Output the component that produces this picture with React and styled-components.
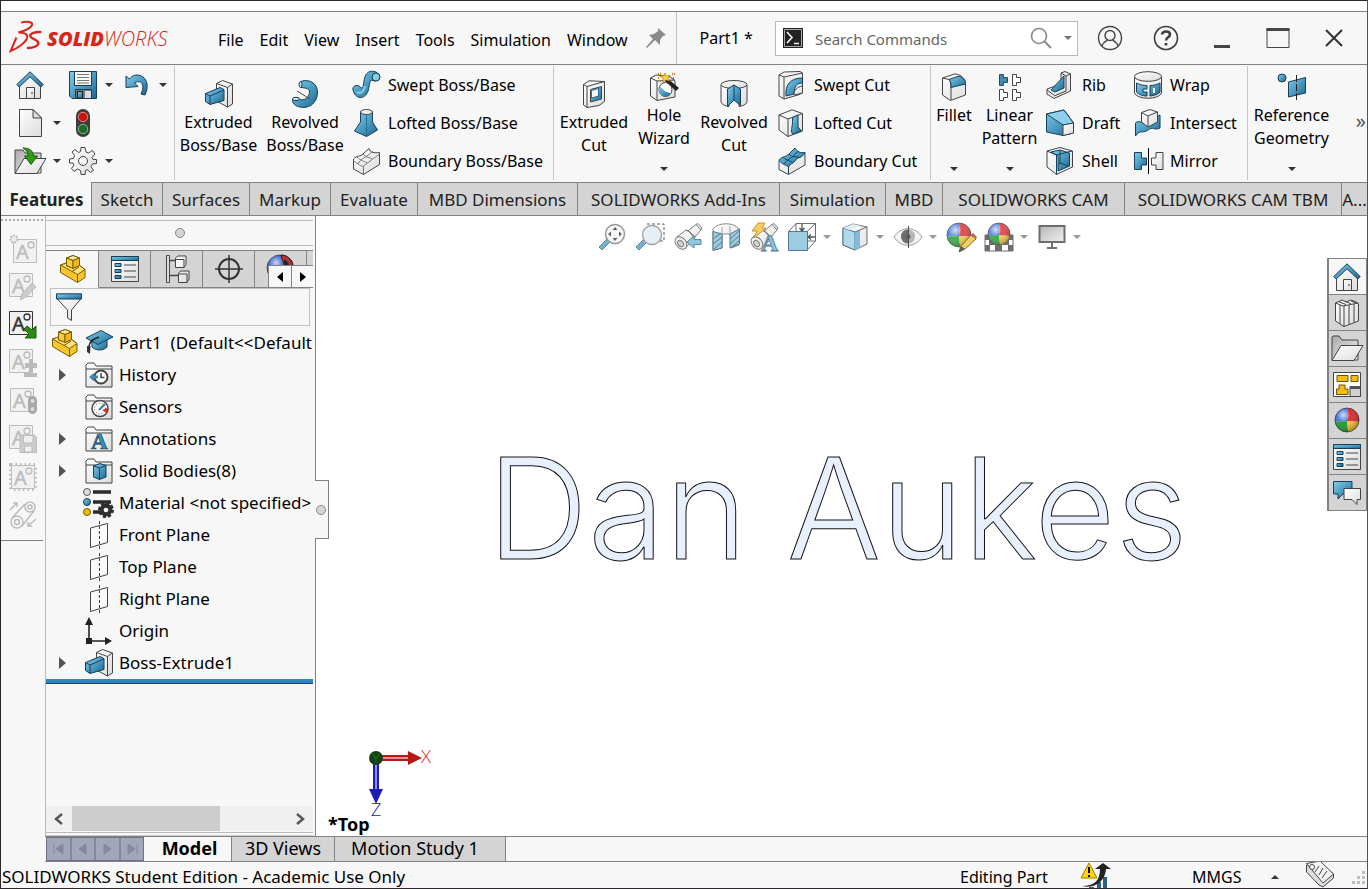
import React from "react";
import styled, { createGlobalStyle, css } from "styled-components";

const GlobalStyle = createGlobalStyle`
  *, *::before, *::after { box-sizing: border-box; }
  body {
    margin: 0;
    background: #fff;
    color: #000;
    font: 16px/24px "Noto Sans", "Open Sans", sans-serif;
  }
  button, input {
    font: inherit;
    color: inherit;
    margin: 0;
    padding: 0;
    border: 0;
    border-radius: 0;
    background: none;
    outline: none;
  }
  ul { list-style: none; margin: 0; padding: 0; }
  svg { display: block; flex: none; }
`;

/* ---------- icon artwork, 28 x 28 grid ---------- */

const B = "url(#blueFill)";
const W = "url(#whiteFill)";
const K = "#444";
const N = "#173f57";

const LINE = { fill: "none", stroke: K };
const SLAB = { fill: W, stroke: K, strokeLinejoin: "round" };
const BLUE = { fill: B, stroke: N, strokeLinejoin: "round" };

const Ball = ({ x = 14, y = 13, r = 12 }) => (
  <g transform={`translate(${x} ${y})`}>
    <path d={`M0 1L${-r} ${r * 0.15}A${r} ${r} 0 0 1 ${r * 0.1} ${-r}Z`} fill="#3b6fd6" />
    <path d={`M0 1L${r * 0.1} ${-r}A${r} ${r} 0 0 1 ${r} ${r * 0.15}Z`} fill="#d9252a" />
    <path d={`M0 1L${-r} ${r * 0.15}A${r} ${r} 0 0 0 ${r * 0.1} ${r}Z`} fill="#149a2c" />
    <path d={`M0 1L${r * 0.1} ${r}A${r} ${r} 0 0 0 ${r} ${r * 0.15}Z`} fill="#f2c230" />
    <circle r={r} fill="url(#shine)" stroke="#333" strokeWidth="0.7" />
  </g>
);

const Brick = () => (
  <g stroke="#7a5a08" strokeLinejoin="round">
    <path d="M1.500 10L7.500 8V3L14 .5L20.500 3V10.500L26 14.500V22.500L18.500 27.500L1.500 17.500Z" fill="#f6c62a" />
    <path d="M7.500 3L14 .5L20.500 3L14 5.500Z" fill="#fdeb9c" />
    <path d="M1.500 10L7.500 8V11L14 13L20.500 10.500L26 14.500L18.500 19.500Z" fill="#fde27a" />
    <path d="M7.500 3L14 5.500V13.500L7.500 10.500Z" fill="#f8cf3a" />
    <path d="M14 5.500L20.500 3V10.500L14 13.500Z" fill="#efb91c" />
    <path d="M18.500 19.500V27.500M13 16.500L20 12" fill="none" />
  </g>
);

const Folder = () => (
  <g>
    <path d="M1 26V4L3 2H9L11 5H27V26Z" {...SLAB} />
    <path d="M1 8H27" stroke={K} />
  </g>
);

const Telescope = () => (
  <g stroke="#666" fill={W} strokeLinejoin="round">
    <path d="M14 8L22 1.500L24 .5L28 5L27 7L20 15Z" />
    <path d="M3 14L12 7L15 8L21 14L20 17L11 25Z" />
    <path d="M22 1.500L27 7M12 7C16 9 19 12 20 17" fill="none" />
    <ellipse cx="7" cy="20" rx="5" ry="7" transform="rotate(-40 7 20)" />
    <ellipse cx="6.500" cy="20.500" rx="2.500" ry="3.500" transform="rotate(-40 6.500 20.500)" fill="#ccc" />
  </g>
);

const NoteBox = ({ x = 1, y = 3 }) => (
  <g transform={`translate(${x} ${y})`}>
    <path d="M.5 .5H23.500V23.500H.5Z" fill="#f1f1f1" stroke="currentColor" />
    <text x="3" y="20" fontSize="20" fontFamily="Noto Sans, sans-serif" fill="currentColor" stroke="currentColor" strokeWidth=".4">A</text>
    <circle cx="18" cy="6" r="3" fill="none" stroke="currentColor" strokeWidth="1.300" />
  </g>
);

const Plane = () => (
  <g>
    <path d="M5.500 7L22.500 2.500V21.500L5.500 26.500Z" fill="#fafafa" stroke={K} />
    <path d="M14.500 0V28" stroke={K} strokeDasharray="3 2" />
  </g>
);

const ART = {
  home: (
    <g>
      <path d="M3.500 13L14 4L24.500 13V27.500H3.500Z" {...SLAB} />
      <path d="M10.500 27V16.500H18.500V27" {...SLAB} />
      <path d="M15 22H17" stroke={K} />
      <path d="M.8 13.500L14 .8L27.200 13.500L24.800 16L14 5.800L3.200 16Z" {...BLUE} />
    </g>
  ),
  save: (
    <g>
      <path d="M.5 .5H27.500V27.500H3L.5 25Z" {...BLUE} />
      <path d="M5.500 .5H22.500V14.500H5.500Z" fill="#f7f7f4" stroke={N} />
      <path d="M8 3.500H20M8 6.500H20M8 9.500H20M8 12H20" stroke="#777" />
      <path d="M6.500 18.500H22.500V27.500H6.500Z" fill="#777" stroke={N} />
      <path d="M8.500 20.500H13.500V27H8.500Z" fill={B} stroke="#222" />
      <path d="M16 20H22V27H16Z" fill="#ddd" />
    </g>
  ),
  undo: (
    <path d="M4 6V17.500L16 16.500L12.500 13C18 9 24 14 19 24L23 25C28 15 24 5 15 5C11 5 9 7 7.500 9Z" transform="translate(0 -1)" {...BLUE} />
  ),
  page: (
    <g>
      <path d="M3.500 .5H17L25.500 9V27.500H3.500Z" {...SLAB} />
      <path d="M17 .5V9H25.500Z" fill="#ddd" stroke={K} />
    </g>
  ),
  traffic: (
    <g>
      <rect x="7" y="0" width="14" height="28" rx="7" fill="#3d3d3d" />
      <circle cx="14" cy="8" r="4.700" fill="#c91208" stroke="#f0857c" />
      <circle cx="14" cy="20" r="4.700" fill="#1d6b25" stroke="#7cc286" />
    </g>
  ),
  open: (
    <g>
      <path d="M-1 26V3H7L9 6H25V26Z" fill="url(#greyFill)" stroke={K} />
      <path d="M-1 26.500L8 11.500H30L21 26.500Z" {...SLAB} />
      <path d="M7 1C14 1 17 4 17.500 9H21.500L15 17.500L8.500 9H12C12 5 10 3 7 1Z" fill="#2f9a14" stroke="#155a05" />
    </g>
  ),
  gear: (
    <g fill={W} stroke={K} strokeLinejoin="round">
      <path d="M12 .5H16L17 5L19.500 6L23.500 3.500L26 7L23 10.500L24 12.500H27.500V16.500L23.500 17L22 19.500L24.500 23.500L21.500 25.500L18 22.500L16.500 23.500L16 27.500H12L11.500 23.500L8.500 22L5 24.500L2.500 21.500L5 18L4 16H.5V12L4.500 11.500L5.500 8.500L3 5L6 2.500L9.500 5.500L11.500 4.500Z" />
      <circle cx="14" cy="14" r="4.500" fill="#f7f7f7" />
    </g>
  ),
  extrude: (
    <g>
      <path d="M11.500 3.500L17.500 .5L27.500 4V24L22.500 27L11.500 21Z" {...SLAB} />
      <path d="M11.500 3.500L22.500 7.500L27.500 4M22.500 7.500V27" {...LINE} />
      <path d="M.5 13.500L15 7.500L19 9.500V20.500L5 24.500L.5 21.500Z" {...BLUE} />
      <path d="M.5 13.500L5 16L19 10M5 16V24.500" fill="none" stroke={N} />
    </g>
  ),
  revolve: (
    <g>
      <path d="M9.500 1.500C20 -2 27 5 26.500 13C26 24 17 29 9 27C4 26 1 23 1.500 19C5 17 8 17 9 20C15 20 18 17 18.500 12C18.500 9 16 8 10 7.500Z" {...BLUE} />
      <ellipse cx="9.500" cy="4.500" rx="1.500" ry="3" fill="#bfe3f3" stroke={N} />
      <ellipse cx="5" cy="19" rx="3.500" ry="1.700" fill="#bfe3f3" stroke={N} />
      <path d="M6 11L19 19" stroke={K} />
    </g>
  ),
  sweep: (
    <g>
      <path d="M.8 18C1 14 7 13 9 17C12 18 11 12 13 6C15 0 20 -1 25 1.500L27.500 4C28 9 24 11 21 9.500C17 8 18 14 16 20C13 29 3 29 .8 18Z" {...BLUE} />
      <circle cx="24" cy="6" r="4" fill="#8ccbe8" stroke={N} />
      <path d="M5 21C9 24 12 20 13 15" stroke="#8ccbe8" strokeWidth="2" fill="none" />
    </g>
  ),
  loft: (
    <g>
      <path d="M8.500 3V13L2.500 22L14.500 27.500L25.500 21L20.500 13V3Z" {...BLUE} />
      <path d="M14.500 5V27" stroke="#2b6d92" />
      <ellipse cx="14.500" cy="3" rx="6" ry="2.500" fill="#eee" stroke={K} />
    </g>
  ),
  boundary: (
    <g>
      <path d="M1.500 12C5 8 8 10 11 7L17 1.500C18 6 22 6 27.500 5.500V17.500L11.500 27.500L1.500 22Z" {...SLAB} />
      <path d="M1.500 14C7 17 9 20 11.500 19L27.500 7M11.500 19V27.500M5 10C9 14 12 14 15 16M11 7C14 11 18 10 20 12M6 17C9 11 14 11 21 4" fill="none" stroke="#777" />
    </g>
  ),
  extrudeCut: (
    <g>
      <path d="M3.500 4.500L9 .8L24.500 1.500V21.500L19 25.500L7 27.500L3.500 25Z" {...SLAB} />
      <path d="M3.500 4.500L7 6.500L24.500 1.500M7 6.500V27.500" {...LINE} />
      <path d="M10.500 9.500L21.500 6.500V19L10.500 22Z" fill={B} stroke={K} />
      <path d="M11.500 10.500L18.500 8.500V16L11.500 18Z" fill="#f3f9fc" stroke={N} strokeWidth=".7" />
    </g>
  ),
  holeWizard: (
    <g>
      <path d="M.5 5L6 2L21 4L25 8V24L7 27.500L.5 23Z" {...SLAB} />
      <path d="M.5 5L7 8L25 7M7 8V27.500" {...LINE} />
      <ellipse cx="15.500" cy="16.500" rx="6.500" ry="7" fill="#fff" stroke={K} />
      <path d="M10 13C14 18 17 20 21 20A6.500 7 0 0 1 9 17Z" fill={B} />
      <path d="M17 5L29 15L26 18L15 8Z" fill="#222" />
      <path d="M15 0L16 3L20 2L18 5L20 8L16 7L13 9L13 5L10 3L14 3Z" fill="#ffd83a" stroke="#b86a00" strokeWidth=".6" />
      <path d="M8 1H11M22 1H25M21 5H24M8 5H10" stroke="#c77b10" strokeWidth="2" strokeDasharray="1 1" />
    </g>
  ),
  revolveCut: (
    <g>
      <path d="M1 5V22C2 25 6 26 9 26.500V8H19V26.500C22 26 26 25 27 22V5Z" {...SLAB} />
      <ellipse cx="14" cy="4.500" rx="13" ry="4" {...SLAB} />
      <path d="M7.500 9L14 5L20.500 9V25.500L14 20L7.500 26.500Z" {...BLUE} />
      <path d="M14 5V20" stroke={N} />
    </g>
  ),
  sweepCut: (
    <g>
      <path d="M1 4L6 1L22 .5L24.500 2V22L20 24L6 28L1 25Z" {...SLAB} />
      <path d="M1 4L6 6L24.500 2M6 6V28" {...LINE} />
      <path d="M8 25C7 14 12 7 24.500 7V12C19 12 16 15 16 23Z" {...BLUE} />
      <path d="M16 24C16 19 19 16 24.500 15V22Z" {...SLAB} />
    </g>
  ),
  loftCut: (
    <g>
      <path d="M1 6L14 .8L24.500 4.500V22L10 27.500L1 21Z" {...SLAB} />
      <path d="M1 6L10 10L24.500 4.500M10 10V27.500" {...LINE} />
      <path d="M14.500 8.500L20 6V18L23.500 22L14.500 25C12 20 15 20 14.500 8.500Z" {...BLUE} />
    </g>
  ),
  boundaryCut: (
    <g>
      <path d="M1 14L27 6V18L10.500 27.500L1 22.500Z" {...SLAB} />
      <path d="M1 13C5 9 8 10 11 7L17 1C19 5 22 6 27 5.500C24 12 20 9 17 14C14 17 12 17 10.500 20C7 17 4 18 1 13Z" {...BLUE} />
      <path d="M5 10C9 14 12 13 15 16M11 7C14 11 18 9 21 10.500M6 17C9 12 14 12 20 4M10.500 20V27" fill="none" stroke={N} />
    </g>
  ),
  fillet: (
    <g>
      <path d="M2.500 5L15 .8C22 2 25.500 6 25.500 11V22L10.500 27.500L2.500 22Z" {...SLAB} />
      <path d="M2.500 5L9 6.500C11 9 11 11 11 14V27" {...LINE} />
      <path d="M9 6.500L19 3C24 5 25.500 8 25.500 11L11 14.500C11 10 11 9 9 6.500Z" {...BLUE} />
    </g>
  ),
  pattern: (
    <g fill="#fff" stroke={K}>
      {[[3, 1], [16, 1], [3, 16], [16, 16]].map(([x, y], i) => (
        <path key={i} transform={`translate(${x} ${y})`} fill={i === 0 ? "#3b8bb4" : "#fff"} d="M.5 .5H4.500V3.500H8.500V8.500H4.500V11.500H.5Z" />
      ))}
    </g>
  ),
  rib: (
    <g>
      <path d="M1 18L15 13V2L19 .5L24.500 3V20L8 27.500L1 23Z" {...SLAB} />
      <path d="M15 2L20 5V20L8 25M20 5L24.500 3M1 19L8 24" {...LINE} />
      <path d="M5 19L18 5V17L9 21Z" {...BLUE} />
    </g>
  ),
  draft: (
    <g>
      <path d="M.5 5L18 1L27.500 14V24L17 26.500L.5 23Z" {...BLUE} />
      <path d="M.5 5L18 1L27.500 14L17 16Z" fill="#8ed0ee" stroke={N} />
      <path d="M17 16L27.500 14V24L17 26.500Z" {...SLAB} />
    </g>
  ),
  shell: (
    <g>
      <path d="M1 4L14 .5L26.500 4V20L10.500 27.500L1 20Z" {...SLAB} />
      <path d="M5 5L14 3L23.500 6V19L12 24V9Z" {...BLUE} />
      <path d="M14 3V16L23 19M14 16L12 18M1 4L10.500 8V27.500M10.500 8L26 4" fill="none" stroke={N} />
    </g>
  ),
  wrap: (
    <g>
      <path d="M.5 6V22C3 29 25 29 27.500 22V6Z" {...SLAB} />
      <ellipse cx="14" cy="5.500" rx="13.500" ry="4.800" {...SLAB} />
      <path d="M2.500 12C6 14 10 14.500 13 14.500V18H9V21H13V25C8 25 4 23 2.500 21ZM16 14.500C20 14.500 23 13.500 26 12V21C24 23.500 20 24.500 16 25Z" {...BLUE} />
      <path d="M20 17V22" stroke="#fff" strokeWidth="2" />
    </g>
  ),
  intersect: (
    <g>
      <path d="M1.500 14C6 10 8 16 12 13L26 6V19C20 22 19 17 14 21C9 25 6 20 1.500 27Z" {...BLUE} />
      <path d="M7.500 3.500L16 .5L23.500 3V13L14 18L7.500 13Z" {...SLAB} />
      <path d="M7.500 3.500L14 7L23.500 3M14 7V18" {...LINE} />
    </g>
  ),
  mirror: (
    <g>
      <path d="M.5 5.500H7.500V11H12.500V18H7.500V22.500H.5Z" {...BLUE} />
      <path d="M29 5.500H22V11H17.500V18H22V22.500H29Z" {...SLAB} />
      <path d="M14.500 1V27" stroke="#000" />
    </g>
  ),
  refGeometry: (
    <g>
      <circle cx="4" cy="5" r="4" {...BLUE} />
      <path d="M10.500 9L27.500 4.500V20L10.500 24Z" {...BLUE} />
      <path d="M18.500 2V28" stroke="#222" strokeDasharray="7 2" />
    </g>
  ),
  brick: <Brick />,
  properties: (
    <g>
      <path d="M.5 1.500H27.500V26.500H.5Z" {...SLAB} />
      <path d="M.5 1.500H27.500V5.500H.5Z" {...BLUE} />
      <path d="M4 8.500H10V11.500H4ZM4 14.500H10V17.500H4ZM4 20.500H10V23.500H4Z" {...BLUE} />
      <path d="M13 10H25M13 16H25M13 22H25" stroke={K} />
    </g>
  ),
  config: (
    <g>
      <path d="M3.500 .5H6.500V27.500H3.500Z" fill="#ddd" stroke={K} />
      <path d="M6.500 5.500H13M6.500 20.500H16" stroke={K} strokeWidth="1.500" />
      <path d="M12.500 3L15 1H23V9.500L21 12.500H12.500ZM15.500 18L18 16H26V24L24 27.500H15.500Z" {...SLAB} />
      <path d="M12.500 4.500H21V12.500M15.500 19H24V27.500" {...LINE} />
    </g>
  ),
  target: (
    <g fill="none" stroke="#333" strokeWidth="2">
      <circle cx="14" cy="14" r="10" />
      <path d="M14 0V28M0 14H28" strokeWidth="1.500" />
    </g>
  ),
  ball: <Ball />,
  displayBall: (
    <g>
      <circle cx="13" cy="13" r="13" fill="#2f5fc4" stroke="#222" strokeWidth=".7" />
      <path d="M14 0C22 0 27 7 26 13H20C16 9 15 4 14 0Z" fill="#b3201f" stroke="#111" />
      <path d="M17 5C20 5 22 8 22 12H18C17 9 17 7 17 5Z" fill="#111" />
      <circle cx="13" cy="13" r="13" fill="url(#shine)" />
    </g>
  ),
  filter: (
    <g>
      <path d="M1.500 5H26.500L16.500 17V27.500L12.500 25V17Z" {...SLAB} />
      <path d="M1.500 .8H26.500V6H1.500Z" {...BLUE} />
    </g>
  ),
  cap: (
    <g>
      <path d="M7 9V18C11 22 18 22 22 18V10Z" {...BLUE} />
      <path d="M1 9L16 1.500L28 8L13 15.500Z" {...BLUE} />
      <path d="M14 8C8 10 5 12 4 17" fill="none" stroke="#222" strokeWidth="1.500" />
      <path d="M2 17H5.500L5 25L2 23Z" fill="#333" />
    </g>
  ),
  history: (
    <g>
      <Folder />
      <circle cx="16" cy="16" r="6.500" fill="#fff" stroke={K} strokeWidth="2" />
      <path d="M16 12V16.500H19.500" {...LINE} strokeWidth="1.500" />
      <path d="M4 16L9 12V14.500H13V17.500H9V20.500Z" fill="#3b8bb4" />
    </g>
  ),
  sensors: (
    <g>
      <Folder />
      <circle cx="15" cy="15.500" r="8" fill="#fff" stroke={K} strokeWidth="1.500" />
      <circle cx="15" cy="15.500" r="5.500" fill="none" stroke={K} strokeDasharray="1 2" />
      <path d="M14 17L20 11" stroke="#2b7ca5" strokeWidth="2" />
      <path d="M17 17L22 15V20Z" fill="#e0321c" />
    </g>
  ),
  annotations: (
    <g>
      <Folder />
      <text x="6" y="24" fontSize="23" fontWeight="bold" fontFamily="Liberation Serif, serif" fill="#3f92bb" stroke={N} strokeWidth=".7">A</text>
    </g>
  ),
  bodies: (
    <g>
      <Folder />
      <path d="M8.500 9L15 6.500L21 8.500V20L14.500 22.500L8.500 20Z" {...BLUE} />
      <path d="M8.500 9L14.500 11L21 8.500M14.500 11V22.500" fill="none" stroke={N} />
    </g>
  ),
  material: (
    <g>
      <circle cx="2" cy="3" r="3.500" fill="#ddd" stroke="#555" />
      <circle cx="2" cy="13" r="3.500" {...BLUE} />
      <circle cx="2" cy="23" r="3.500" fill="#f0b912" stroke="#7a5a08" />
      <path d="M8 3H26M8 13H26M8 23H16" stroke="#2b2b2b" strokeWidth="3.500" />
      <circle cx="21" cy="21" r="6.500" fill="#2f2f2f" stroke="#2f2f2f" strokeWidth="3" strokeDasharray="3 2" />
      <circle cx="21" cy="21" r="2.300" fill="#f7f7f7" />
    </g>
  ),
  plane: <Plane />,
  origin: (
    <g fill="#222">
      <path d="M4 0L8 8H0Z" />
      <path d="M27 24L20 20V28Z" />
      <path d="M4 7V24H21" fill="none" stroke="#222" strokeWidth="1.600" />
      <path d="M1 21H7V27H1Z" />
    </g>
  ),
  newNote: (
    <g>
      <NoteBox x={4} y={4} />
      <circle cx="5" cy="4" r="3.500" fill="#eee" stroke="currentColor" strokeWidth="2" strokeDasharray="2 1" />
    </g>
  ),
  editNote: (
    <g>
      <NoteBox x={0} y={0} />
      <path d="M11 27L13 21L23 10L27 14L17 24Z" fill="#ccc" stroke="currentColor" />
    </g>
  ),
  insertNote: (
    <g>
      <NoteBox x={0} y={0} />
      <path d="M15 18L18 15L23 19L27 15V27H16L20 23Z" fill="#2f8a14" stroke="#1c5c0a" />
    </g>
  ),
  addNote: (
    <g>
      <NoteBox x={0} y={0} />
      <path d="M20 10H24V14H28V19H24V23H20V19H16V14H20ZM15 24H28V28H15Z" fill="#bbb" />
    </g>
  ),
  lightNote: (
    <g>
      <NoteBox x={1} y={1} />
      <rect x="19" y="9" width="9" height="18" rx="4.500" fill="#a8a8a8" />
      <circle cx="23.500" cy="14" r="2" fill="#ddd" />
      <circle cx="23.500" cy="22" r="2" fill="#ddd" />
    </g>
  ),
  saveNote: (
    <g>
      <NoteBox x={0} y={0} />
      <path d="M11 10H25L27.500 12V27.500H11Z" fill="#ccc" stroke="currentColor" />
      <path d="M14.500 10.500H24V18H14.500ZM15.500 21H23V27H15.500Z" fill="#eee" stroke="currentColor" />
    </g>
  ),
  selectNote: (
    <g>
      <path d="M2 2H26V26H2Z" fill="none" stroke="currentColor" strokeWidth="4" strokeDasharray="1.500 3" />
      <NoteBox x={2} y={2} />
    </g>
  ),
  linkNote: (
    <g fill="none" stroke="currentColor" strokeWidth="1.500">
      <circle cx="8" cy="21" r="6" />
      <circle cx="8" cy="21" r="2.500" />
      <circle cx="21" cy="6" r="5" />
      <circle cx="21" cy="6" r="2" />
      <path d="M3 17L16 3M13 25L25 10M1 9L8 2M4 2H8V6M27 18L19 25M19 21V25H23" />
    </g>
  ),
  zoomFit: (
    <g>
      <path d="M1 24L9 16L12 19L4 27Z" fill="#5ea3c6" stroke="#3a7896" />
      <circle cx="17" cy="11" r="9.500" fill="#f5f7f9" stroke="#888" strokeWidth="1.500" />
      <path d="M17 4L19.500 7H14.500ZM17 18L14.500 15H19.500ZM10 11L13 8.500V13.500ZM24 11L21 13.500V8.500Z" fill="#444" />
    </g>
  ),
  zoomArea: (
    <g>
      <path d="M11 1H28V18H22" fill="none" stroke="#444" strokeDasharray="3 2" />
      <path d="M0 24L8 16L11 19L3 27Z" fill="#5ea3c6" stroke="#3a7896" />
      <circle cx="16" cy="12" r="9.500" fill="#e3edf3" stroke="#999" strokeWidth="1.500" />
    </g>
  ),
  prevView: (
    <g>
      <Telescope />
      <path d="M13 19L20 13V16.500H27V21.500H20V25Z" fill="#7cbcdb" stroke="#3a7896" />
    </g>
  ),
  section: (
    <g>
      <path d="M1 6C6 -1 22 -1 27 6V22L19 25V11H10V25L1 27Z" fill={W} stroke="#777" />
      <path d="M1 8.500L10 11V25L1 27.500ZM18 11L27.500 6V21L18 25Z" fill="#8cc3dd" stroke="#33617a" />
      <path d="M1 16L9 10M1 21L10 14M2 26L10 19M18 16L27 8M18 21L27 13M20 24L27 18" stroke="#33617a" />
      <path d="M10 11V4M18 11V3" stroke="#999" />
    </g>
  ),
  dynamicView: (
    <g>
      <Telescope />
      <path d="M8 0H15L12 5H16L4 15L7 8H2Z" fill="#fbc64b" stroke="#c77b10" />
      <text x="11" y="28" fontSize="24" fontWeight="bold" fontFamily="Liberation Serif, serif" fill="#7cbcdb" stroke="#33617a" strokeWidth=".8">A</text>
    </g>
  ),
  orientation: (
    <g>
      <path d="M.5 8.500L8 .5H27.500V18L19 27M8 .5V8M27.500 .5L19 8.500M27 18H19" fill="none" stroke="#555" />
      <path d="M.5 8.500H19.500V27.500H.5Z" fill="#8cc3dd" stroke="#33617a" />
      <path d="M14 1V7M11.500 5L14 8L16.500 5M27 14H21M23 11.500L20 14L23 16.500" fill="none" stroke="#333" strokeWidth="1.300" />
    </g>
  ),
  display: (
    <g>
      <path d="M2 5L12 1L26 4V21L14 27L2 22Z" fill={W} stroke="#555" />
      <path d="M2 5L14 9V27L2 22Z" fill="#a4d4ea" stroke="#33617a" />
      <path d="M2 5L12 1L19 2.500L9 7Z" fill="#d3ebf5" />
      <path d="M14 9L19 7V25L14 27Z" fill="#6bb0d1" />
      <path d="M14 9L26 4" stroke="#555" />
    </g>
  ),
  eye: (
    <g>
      <path d="M0 14C7 3 21 3 28 14C21 25 7 25 0 14Z" fill="#f4f4f4" stroke="#888" />
      <circle cx="14" cy="13.500" r="7" fill="#aaa" />
      <path d="M14 6.500A7 7 0 0 0 14 20.500Z" fill="#555" />
      <circle cx="14" cy="13.500" r="2.500" fill="#444" />
      <path d="M14.500 3V25" stroke="#333" />
    </g>
  ),
  appearance: (
    <g>
      <Ball x={12} y={12} r={12} />
      <path d="M12 29L14 23L24 12L29 16L18 26Z" fill="#f0c843" stroke="#6b5210" />
      <path d="M24 12L26 10L30 14L29 16Z" fill="#b34b3c" />
      <path d="M12 29L14 23L18 26Z" fill="#444" />
    </g>
  ),
  scene: (
    <g>
      <path d="M0 12H28V28H0Z" fill="#fff" stroke="#555" />
      <path d="M0 12H6V17H0ZM22 12H28V17H22ZM4 17H10V22H4ZM18 17H24V22H18ZM0 22H5V28H0ZM10 22H17V28H10ZM23 22H28V28H23Z" fill="#555" />
      <Ball x={14} y={11} r={11} />
    </g>
  ),
  monitor: (
    <g>
      <path d="M1.500 3H26.500V19H1.500Z" fill="url(#greyFill)" stroke="#555" strokeWidth="2" />
      <path d="M13 20H15V24H19V26H9V24H13Z" fill="#555" />
    </g>
  ),
  library: (
    <g>
      <path d="M2.500 4L9 1L13 3L18 1L23 3L25.500 5V22L11 27.500L2.500 22Z" {...SLAB} />
      <path d="M2.500 4L10 7L25.500 4M7 6V25M11 7V27.500M16 6V25.500M21 5V23.500M6 3L13 5.500M12 2L18 5M18 2L23 4" {...LINE} />
    </g>
  ),
  folder: (
    <g>
      <path d="M-1 25V2L0 1H6L9 5H25V25Z" fill="url(#greyFill)" stroke={K} />
      <path d="M-1 25.500L8 10.500H30L21 25.500Z" {...SLAB} />
    </g>
  ),
  palette: (
    <g>
      <path d="M.5 1.500H27.500V25.500H.5Z" fill="#fff" stroke={K} />
      <path d="M4 4.500H15V10.500H4ZM18 4.500H25V10.500H18ZM6 14H12V18H15V23.500H3.500V18H6Z" fill="#f5bd14" stroke="#6e500a" />
      <path d="M17 15.500H27.500V25.500H17Z" fill="#d0d0d0" stroke={K} />
      <path d="M17 16.500H27" stroke="#555" strokeWidth="3" />
    </g>
  ),
  forum: (
    <g>
      <path d="M.5 2.500H19V15H10L5 20V15H.5Z" {...BLUE} />
      <path d="M11 9.500H27.500V20.500H24V25.500L19 20.500H11Z" {...SLAB} />
    </g>
  ),
  rebuild: (
    <g>
      <path d="M8 24H13V28H8ZM16 19H20V28H16ZM22 14H26V28H22ZM1 27H6V28H1Z" fill="#2b6182" />
      <path d="M1 23C14 23 19 17 19 6H14L22 0L30 6H25C24 19 13 26 1 23Z" fill="#222" />
      <path d="M8 0L16 15H0Z" fill="#ffd500" stroke="#a07800" strokeLinejoin="round" />
      <path d="M8 4V10M8 12V14" stroke="#000" strokeWidth="2" />
    </g>
  ),
  tag: (
    <g stroke="#444" strokeLinejoin="round">
      <path d="M.5 2L14 0L27.500 11V15L17 24L13 22L.5 9Z" fill="#ddd" />
      <path d="M.5 .5L14 -2L27.500 11L17 20Z" fill="#f3f3f3" />
      <circle cx="6" cy="4" r="2.500" fill="#fff" />
      <path d="M9 9L13 3M13 12L17 5M16 15L21 8" />
    </g>
  ),
};

const Icon = ({ name, size = 28 }) => (
  <svg width={size} height={size} viewBox="0 0 28 28" overflow="visible" aria-hidden="true">
    {ART[name]}
  </svg>
);

const PaintDefs = styled.svg`
  position: absolute;
  width: 0;
  height: 0;
`;

const SharedPaint = () => (
  <PaintDefs aria-hidden="true">
    <defs>
      <linearGradient id="blueFill" x1="0" y1="0" x2="1" y2="1">
        <stop offset="0" stopColor="#86cbea" />
        <stop offset="0.5" stopColor="#4b9cc3" />
        <stop offset="1" stopColor="#21658b" />
      </linearGradient>
      <linearGradient id="whiteFill" x1="0" y1="0" x2="1" y2="1">
        <stop offset="0" stopColor="#fff" />
        <stop offset="1" stopColor="#dcdcdc" />
      </linearGradient>
      <linearGradient id="greyFill" x1="0" y1="0" x2="1" y2="1">
        <stop offset="0" stopColor="#aaa" />
        <stop offset="1" stopColor="#efefef" />
      </linearGradient>
      <radialGradient id="shine" cx="0.35" cy="0.3" r="0.75">
        <stop offset="0" stopColor="#fff" stopOpacity="0.75" />
        <stop offset="0.4" stopColor="#fff" stopOpacity="0.05" />
        <stop offset="1" stopColor="#000" stopOpacity="0.35" />
      </radialGradient>
    </defs>
  </PaintDefs>
);

/* ---------- frame ---------- */

const edge = "#828282";
const surface = "#f7f7f7";
const idle = "#d4d4d4";

const Window = styled.div`
  display: flex;
  flex-direction: column;
  min-height: 100vh;
  background: ${surface};
  border: 1px solid #29272b;
  border-right-color: #55535a;
`;

const TopMargin = styled.div`
  height: 11px;
  background: #fff;
  border-bottom: 1px solid ${edge};
`;

const TitleBar = styled.header`
  display: flex;
  align-items: center;
  height: 53px;
  padding-right: 5px;
  border-bottom: 1px solid ${edge};
`;

const Logo = styled.div`
  display: flex;
  align-items: center;
  gap: 5px;
  width: 209px;
  padding-left: 8px;
  color: #d9261c;
  font: italic 800 20px/24px "Open Sans", "Noto Sans", sans-serif;
  div { padding-top: 2px; }
  span { font-weight: 300; }
`;

const Menu = styled.nav`
  display: flex;
  align-items: center;
`;

const MenuItem = styled.button`
  height: 32px;
  padding: 3px 8px 0;
`;

const PinButton = styled.button`
  display: flex;
  padding: 0 10px;
  color: #8a8a8a;
`;

const DocumentName = styled.div`
  flex: 1;
  align-self: stretch;
  display: flex;
  align-items: center;
  min-width: 96px;
  padding: 0 0 0 23px;
  border-left: 1px solid #c3c3c3;
`;

const SearchBox = styled.label`
  display: flex;
  align-items: center;
  width: 303px;
  height: 35px;
  padding: 0 5px 0 7px;
  gap: 12px;
  background: #fff;
  border: 1px solid #b9b9b9;
  input {
    flex: 1;
    min-width: 0;
    padding-top: 2px;
    font-size: 15px;
    &::placeholder { color: #666; opacity: 1; }
  }
`;

const WindowActions = styled.div`
  display: flex;
  padding-left: 4px;
`;

const WindowButton = styled.button`
  display: flex;
  align-items: center;
  justify-content: center;
  width: 56px;
  height: 40px;
`;

const Caret = styled.span`
  flex: none;
  width: 0;
  height: 0;
  border: 4px solid transparent;
  border-bottom-width: 0;
  border-top-color: ${(p) => p.$color || "#333"};
  ${(p) => p.$up && css`transform: rotate(180deg);`}
`;

/* ---------- ribbon ---------- */

const Ribbon = styled.section`
  display: flex;
  padding: 1px 0 2px;
`;

const RibbonGroup = styled.div`
  display: flex;
  flex: none;
  width: ${(p) => p.$w}px;
  height: 114px;
  border-right: 1px solid ${(p) => (p.$last ? "transparent" : "#c6c6c6")};
`;

const QuickGrid = styled.div`
  display: grid;
  grid-template: repeat(3, 38px) / 32px 21px 32px 20px 34px 19px;
  padding-left: 13px;
`;

const QuickButton = styled.button`
  display: flex;
  align-items: center;
  justify-content: center;
`;

const LargeButton = styled.button`
  display: flex;
  flex-direction: column;
  align-items: center;
  flex: none;
  gap: 3px;
  width: ${(p) => p.$w}px;
  height: 114px;
  padding: ${(p) => (p.$menu ? 7 : 14)}px 0 9px;
  line-height: 23px;
  white-space: pre-line;
  ${Caret} { margin-top: auto; }
`;

const CommandList = styled.div`
  display: flex;
  flex-direction: column;
  flex: none;
  width: ${(p) => p.$w}px;
  padding-left: 4px;
`;

const CommandButton = styled.button`
  display: flex;
  align-items: center;
  gap: 8px;
  height: 38px;
  white-space: nowrap;
`;

const MoreButton = styled.button`
  margin-left: auto;
  padding: 0 1px 4px 0;
  color: #555;
  font-size: 20px;
`;

const TabStrip = styled.div`
  display: flex;
  height: 34px;
  border-bottom: 1px solid ${edge};
  font-size: 17px;
`;

const RibbonTab = styled.button`
  flex: ${(p) => (p.$fill ? "1 1 0" : "none")};
  width: ${(p) => (p.$fill ? "auto" : `${p.$w}px`)};
  padding-top: 1px;
  overflow: hidden;
  white-space: nowrap;
  background: ${idle};
  border-top: 1px solid ${edge};
  border-left: 1px solid ${edge};
  color: #222;
  ${(p) => p.$on && css`
    background: ${surface};
    border-color: transparent;
    font-weight: 700;
  `}
`;

/* ---------- workspace ---------- */

const Workspace = styled.main`
  display: flex;
  flex: 1;
`;

const NoteTools = styled.aside`
  flex: none;
  width: 44px;
`;

const NoteToolList = styled.div`
  display: flex;
  flex-direction: column;
  width: 42px;
  margin-top: 3px;
  padding: 9px 0 6px;
  border-top: 2px dotted #aaa;
  border-bottom: 1px solid ${edge};
`;

const NoteTool = styled.button`
  display: flex;
  align-items: center;
  justify-content: center;
  height: 38px;
  padding-left: 2px;
  color: ${(p) => (p.$on ? "#333" : "#bcbcbc")};
`;

const WorkArea = styled.div`
  display: flex;
  flex-direction: column;
  flex: 1;
  min-width: 0;
`;

const WorkRow = styled.div`
  display: flex;
  flex: 1;
`;

const FeaturePanel = styled.section`
  position: relative;
  display: flex;
  flex-direction: column;
  flex: none;
  width: 271px;
  padding-right: 2px;
  border-left: 1px solid #bbb;
  border-right: 1px solid ${edge};
`;

const PanelGrip = styled.div`
  display: flex;
  align-items: center;
  justify-content: center;
  height: 26px;
  margin: 4px 0 4px;
  border-top: 1px solid #bbb;
  border-bottom: 1px solid #bbb;
`;

const Knob = styled.span`
  flex: none;
  width: 10px;
  height: 10px;
  border: 1px solid #888;
  border-radius: 50%;
  background: #d5d5d5;
`;

const PanelTabs = styled.div`
  position: relative;
  display: flex;
  height: 38px;
  padding-left: 1px;
  overflow: hidden;
  border-top: 1px solid ${edge};
`;

const PanelTab = styled.button`
  display: flex;
  align-items: center;
  justify-content: center;
  flex: none;
  width: 52px;
  background: ${(p) => (p.$on ? surface : idle)};
  border-right: 1px solid ${edge};
  border-bottom: 1px solid ${(p) => (p.$on ? surface : edge)};
`;

const PanelTabScroll = styled.div`
  position: absolute;
  right: 0;
  bottom: 0;
  display: flex;
  border-left: 1px solid ${edge};
  button {
    display: flex;
    align-items: center;
    justify-content: center;
    width: 22px;
    height: 23px;
    background: ${surface};
    border-top: 1px solid ${edge};
    border-bottom: 1px solid ${edge};
    & + button { border-left: 1px solid ${edge}; }
  }
`;

const FilterBox = styled.label`
  display: flex;
  align-items: center;
  height: 38px;
  margin: 0 3px 0 4px;
  padding-left: 4px;
  border: 1px solid #c3c3c3;
  input { flex: 1; min-width: 0; margin-left: 8px; }
`;

const Tree = styled.ul`
  overflow: hidden;
  padding-top: 1px;
  border-bottom: 4px solid #2f86bf;
  box-shadow: 0 1px 0 #1c35a8;
  font-size: 17px;
`;

const TreeRow = styled.li`
  display: flex;
  align-items: center;
  gap: 6px;
  height: 32px;
  padding-left: ${(p) => (p.$root ? 5 : 13)}px;
  white-space: pre;
`;

const Expander = styled.button`
  width: 20px;
  height: 20px;
  display: flex;
  align-items: center;
`;

const ScrollTrack = styled.div`
  display: flex;
  justify-content: space-between;
  height: 25px;
  margin-top: auto;
  background: #f0f0f0;
`;

const ScrollArrow = styled.button`
  display: flex;
  align-items: center;
  justify-content: center;
  width: 26px;
`;

const ScrollThumb = styled.div`
  width: 148px;
  margin-right: auto;
  background: #cdcdcd;
`;

const PanelFoot = styled.div`
  height: 4px;
  margin-top: 1px;
  border-top: 1px solid #bbb;
  border-bottom: 1px solid #ccc;
`;

const SplitHandle = styled.button`
  position: absolute;
  z-index: 1;
  right: -14px;
  top: 264px;
  display: flex;
  align-items: center;
  justify-content: center;
  width: 14px;
  height: 59px;
  padding-right: 2px;
  background: ${surface};
  border: 1px solid ${edge};
  border-left: 0;
`;

const Viewport = styled.section`
  position: relative;
  flex: 1;
  min-width: 0;
  background: #fff;
`;

const ViewToolbar = styled.div`
  display: flex;
  justify-content: center;
  padding: 2px 4px 0 0;
`;

const ViewTool = styled.button`
  display: flex;
  align-items: center;
  justify-content: flex-end;
  gap: 7px;
  width: ${(p) => (p.$menu ? 53 : 38)}px;
  height: 38px;
  padding-right: 5px;
  opacity: 0.85;
`;

const ModelText = styled.div`
  position: absolute;
  left: 0;
  right: 0;
  top: 208px;
  padding-right: 8px;
  text-align: center;
  font: 300 140px/168px Inter, Lato, sans-serif;
  color: #e8effd;
  -webkit-text-stroke: 1px #111;
`;

const Triad = styled.svg`
  position: absolute;
  left: 44px;
  bottom: 17px;
`;

const ViewName = styled.div`
  position: absolute;
  left: 12px;
  bottom: 0;
  font-size: 18px;
  font-weight: 700;
`;

const TaskPane = styled.div`
  position: absolute;
  top: 42px;
  right: 0;
  border-left: 2px solid ${edge};
  border-right: 1px solid ${edge};
  border-bottom: 1px solid ${edge};
`;

const TaskButton = styled.button`
  display: flex;
  align-items: center;
  justify-content: center;
  width: 37px;
  height: 36px;
  padding-right: 1px;
  background: ${(p) => (p.$on ? surface : idle)};
  border-top: 1px solid ${edge};
`;

const StudyTabs = styled.div`
  display: flex;
  height: 26px;
  padding-left: 1px;
  border-top: 1px solid ${edge};
  border-bottom: 1px solid ${edge};
  font-size: 18px;
  line-height: 20px;
`;

const StudyNav = styled.div`
  display: flex;
  width: 98px;
  background: #8d8fa5;
  border: 1px solid #6f7187;
`;

const StudyNavButton = styled.button`
  display: flex;
  align-items: center;
  justify-content: center;
  flex: 1;
  background: #a3a5ba;
  & + & { border-left: 2px solid #8587a0; }
`;

const StudyTab = styled.button`
  width: ${(p) => p.$w}px;
  padding-left: ${(p) => (p.$on ? 4 : 0)}px;
  padding-right: ${(p) => p.$end || 0}px;
  padding-bottom: 2px;
  background: ${(p) => (p.$on ? surface : idle)};
  font-weight: ${(p) => (p.$on ? 700 : 400)};
  border-right: 1px solid ${edge};
`;

const StatusBar = styled.footer`
  display: flex;
  align-items: center;
  height: 26px;
  padding: 4px 2px 0 1px;
  overflow: hidden;
  line-height: 22px;
  white-space: nowrap;
`;

const StatusMessage = styled.div`
  flex: 1;
  font-size: 17px;
`;

const StatusCell = styled.div`
  display: flex;
  align-items: center;
  width: ${(p) => p.$w}px;
`;

/* ---------- content ---------- */

const MENU = ["File", "Edit", "View", "Insert", "Tools", "Simulation", "Window"];

const QUICK = [
  ["Home", "home"], [], ["Save", "save"], ["Save options"], ["Undo", "undo"], ["Undo options"],
  ["New", "page"], ["New options"], ["Rebuild", "traffic"], [], [], [],
  ["Open", "open"], ["Open options"], ["Options", "gear"], ["More options"],
];

const TABS = [
  ["Features", 90], ["Sketch", 71], ["Surfaces", 87], ["Markup", 81], ["Evaluate", 87],
  ["MBD Dimensions", 160], ["SOLIDWORKS Add-Ins", 202], ["Simulation", 106], ["MBD", 57],
  ["SOLIDWORKS CAM", 182], ["SOLIDWORKS CAM TBM", 217], ["A...", 0],
];

const NOTE_TOOLS = [
  ["New note", "newNote"], ["Edit note", "editNote"], ["Insert note", "insertNote"], ["Add or remove note", "addNote"],
  ["Note visibility", "lightNote"], ["Save note", "saveNote"], ["Select note", "selectNote"], ["Link note", "linkNote"],
];

const PANEL_TABS = [["Features", "brick"], ["Properties", "properties"], ["Configurations", "config"], ["Dimensions", "target"], ["Display", "displayBall"], ["CAM", null]];

const TREE = [
  ["History", "history", true],
  ["Sensors", "sensors", false],
  ["Annotations", "annotations", true],
  ["Solid Bodies(8)", "bodies", true],
  ["Material <not specified>", "material", false],
  ["Front Plane", "plane", false],
  ["Top Plane", "plane", false],
  ["Right Plane", "plane", false],
  ["Origin", "origin", false],
  ["Boss-Extrude1", "extrude", true],
];

const VIEW_TOOLS = [
  ["Zoom to fit", "zoomFit"], ["Zoom to area", "zoomArea"], ["Previous view", "prevView"],
  ["Section view", "section"], ["Dynamic annotation views", "dynamicView"],
  ["View orientation", "orientation", true], ["Display style", "display", true],
  ["Hide or show items", "eye", true], ["Edit appearance", "appearance"],
  ["Apply scene", "scene", true], ["View settings", "monitor", true],
];

const TASKS = [
  ["Resources", "home"], ["Design library", "library"], ["File explorer", "folder"],
  ["View palette", "palette"], ["Appearances", "ball"], ["Custom properties", "properties"], ["Forum", "forum"],
];

const Large = ({ icon, label, w, menu }) => (
  <LargeButton type="button" $w={w} $menu={menu}>
    <Icon name={icon} />
    <span>{label}</span>
    {menu && <Caret />}
  </LargeButton>
);

const Commands = ({ w, items }) => (
  <CommandList $w={w}>
    {items.map(([label, icon]) => (
      <CommandButton type="button" key={label}>
        <Icon name={icon} />
        {label}
      </CommandButton>
    ))}
  </CommandList>
);

const Chevron = ({ right }) => (
  <svg width="10" height="12" viewBox="0 0 10 12" fill="none" stroke="#555" strokeWidth="2.400" aria-hidden="true">
    <path d={right ? "M2 1L8 6L2 11" : "M8 1L2 6L8 11"} />
  </svg>
);

const NAV = [
  ["First", "M3 2V12M12 2L5 7L12 12Z"],
  ["Previous", "M10 2L3 7L10 12Z"],
  ["Next", "M4 2L11 7L4 12Z"],
  ["Last", "M12 2V12M3 2L10 7L3 12Z"],
];

export default function App() {
  return (
    <Window>
      <GlobalStyle />
      <SharedPaint />
      <TopMargin />
      <TitleBar>
        <Logo>
          <svg width="33" height="33" viewBox="24 60 98 98" fill="none" stroke="currentColor" overflow="visible" aria-hidden="true">
            <path d="M60 62C76 56 98 60 92 70C86 80 68 87 52 91C66 91 80 94 78 106C75 120 50 138 29 146L46 106" strokeWidth="6" />
            <path d="M120 90C101 89 87 93 87 101C88 110 109 112 111 121C112 132 94 138 77 137" strokeWidth="7" />
          </svg>
          <div>SOLID<span>WORKS</span></div>
        </Logo>
        <Menu aria-label="Main">
          {MENU.map((m) => <MenuItem type="button" key={m}>{m}</MenuItem>)}
        </Menu>
        <PinButton type="button" aria-label="Pin menu">
          <svg width="20" height="20" viewBox="0 0 20 20" fill="currentColor" aria-hidden="true">
            <path d="M12 0L20 7L17 8L14 12L14 17L9 12L1 20L0 19L7 11L3 7L8 6L12 3Z" />
          </svg>
        </PinButton>
        <DocumentName>Part1 *</DocumentName>
        <SearchBox>
          <svg width="20" height="20" viewBox="0 0 20 20" aria-hidden="true">
            <path d="M0 0H20V20H0Z" fill="#222" />
            <path d="M1.500 1.500H18.500V18.500H1.500Z" fill="none" stroke="#aaa" />
            <path d="M4 4L9 9.500L4 15M11 15.500H16" fill="none" stroke="#fff" strokeWidth="1.600" />
          </svg>
          <input type="search" placeholder="Search Commands" aria-label="Search Commands" />
          <svg width="22" height="22" viewBox="0 0 22 22" fill="none" stroke="#888" strokeWidth="1.600" aria-hidden="true">
            <circle cx="9" cy="9" r="7.500" />
            <path d="M14.500 14.500L21 21" strokeWidth="2" />
          </svg>
          <Caret $color="#777" />
        </SearchBox>
        <WindowActions>
          <WindowButton type="button" aria-label="Account">
            <svg width="26" height="26" viewBox="0 0 26 26" fill="none" stroke="#444" strokeWidth="1.400">
              <circle cx="13" cy="13" r="11.500" />
              <circle cx="13" cy="10.500" r="5" />
              <path d="M5 21C6 17 9 16 10.500 15M21 21C20 17 17 16 15.500 15" />
            </svg>
          </WindowButton>
          <WindowButton type="button" aria-label="Help">
            <svg width="26" height="26" viewBox="0 0 26 26" fill="none" stroke="#3c3c3c">
              <circle cx="13" cy="13" r="11.500" strokeWidth="1.600" />
              <path d="M9 9.500C9 5.500 17 5.500 17 9.500C17 12.500 13 12 13 15.500M13 18V20.500" strokeWidth="2.600" />
            </svg>
          </WindowButton>
          <WindowButton type="button" aria-label="Minimize">
            <svg width="24" height="24" viewBox="0 0 24 24"><path d="M4 19H20V22H4Z" fill="#444" /></svg>
          </WindowButton>
          <WindowButton type="button" aria-label="Maximize">
            <svg width="24" height="22" viewBox="0 0 24 22"><path d="M1 2H23V20.500H1Z" fill="none" stroke="#444" /><path d="M.5 1H23.500V4H.5Z" fill="#444" /></svg>
          </WindowButton>
          <WindowButton type="button" aria-label="Close">
            <svg width="18" height="18" viewBox="0 0 18 18" stroke="#333" strokeWidth="2"><path d="M1 1L17 17M17 1L1 17" /></svg>
          </WindowButton>
        </WindowActions>
      </TitleBar>

      <Ribbon aria-label="Features commands">
        <RibbonGroup $w={174}>
          <QuickGrid>
            {QUICK.map(([label, icon], i) =>
              label ? (
                <QuickButton type="button" key={i} aria-label={label}>
                  {icon ? <Icon name={icon} /> : <Caret />}
                </QuickButton>
              ) : <span key={i} />
            )}
          </QuickGrid>
        </RibbonGroup>
        <RibbonGroup $w={379}>
          <Large icon="extrude" label={"Extruded\nBoss/Base"} w={87} />
          <Large icon="revolve" label={"Revolved\nBoss/Base"} w={86} />
          <Commands w={200} items={[["Swept Boss/Base", "sweep"], ["Lofted Boss/Base", "loft"], ["Boundary Boss/Base", "boundary"]]} />
        </RibbonGroup>
        <RibbonGroup $w={377}>
          <Large icon="extrudeCut" label={"Extruded\nCut"} w={80} />
          <Large icon="holeWizard" label={"Hole\nWizard"} w={60} menu />
          <Large icon="revolveCut" label={"Revolved\nCut"} w={80} />
          <Commands w={152} items={[["Swept Cut", "sweepCut"], ["Lofted Cut", "loftCut"], ["Boundary Cut", "boundaryCut"]]} />
        </RibbonGroup>
        <RibbonGroup $w={317}>
          <Large icon="fillet" label="Fillet" w={46} menu />
          <Large icon="pattern" label={"Linear\nPattern"} w={65} menu />
          <Commands w={88} items={[["Rib", "rib"], ["Draft", "draft"], ["Shell", "shell"]]} />
          <Commands w={112} items={[["Wrap", "wrap"], ["Intersect", "intersect"], ["Mirror", "mirror"]]} />
        </RibbonGroup>
        <RibbonGroup $w={88} $last>
          <Large icon="refGeometry" label={"Reference\nGeometry"} w={87} menu />
        </RibbonGroup>
        <MoreButton type="button" aria-label="More commands">»</MoreButton>
      </Ribbon>

      <TabStrip role="tablist">
        {TABS.map(([label, w], i) => (
          <RibbonTab type="button" role="tab" aria-selected={i === 0} key={label} $w={w} $on={i === 0} $fill={!w}>{label}</RibbonTab>
        ))}
      </TabStrip>

      <Workspace>
        <NoteTools>
          <NoteToolList>
            {NOTE_TOOLS.map(([label, icon]) => (
              <NoteTool type="button" key={icon} aria-label={label} $on={icon === "insertNote"}><Icon name={icon} /></NoteTool>
            ))}
          </NoteToolList>
        </NoteTools>
        <WorkArea>
          <WorkRow>
            <FeaturePanel>
              <PanelGrip><Knob /></PanelGrip>
              <PanelTabs role="tablist">
                {PANEL_TABS.map(([label, icon], i) => (
                  <PanelTab type="button" role="tab" key={label} aria-label={label} aria-selected={i === 0} $on={i === 0}>
                    {icon && <Icon name={icon} />}
                  </PanelTab>
                ))}
                <PanelTabScroll>
                  <button type="button" aria-label="Previous tabs"><svg width="6" height="10"><path d="M6 0L0 5L6 10Z" /></svg></button>
                  <button type="button" aria-label="Next tabs"><svg width="6" height="10"><path d="M0 0L6 5L0 10Z" /></svg></button>
                </PanelTabScroll>
              </PanelTabs>
              <FilterBox>
                <Icon name="filter" />
                <input type="text" aria-label="Filter" />
              </FilterBox>
              <Tree>
                <TreeRow $root>
                  <Icon name="brick" />
                  <Icon name="cap" />
                  {"Part1  (Default<<Default"}
                </TreeRow>
                {TREE.map(([label, icon, open]) => (
                  <TreeRow key={label}>
                    <Expander type="button" aria-label={`Expand ${label}`} disabled={!open}>
                      {open && <svg width="7" height="12"><path d="M0 0L7 6L0 12Z" fill="#555" /></svg>}
                    </Expander>
                    <Icon name={icon} />
                    {label}
                  </TreeRow>
                ))}
              </Tree>
              <ScrollTrack>
                <ScrollArrow type="button" aria-label="Scroll left"><Chevron /></ScrollArrow>
                <ScrollThumb />
                <ScrollArrow type="button" aria-label="Scroll right"><Chevron right /></ScrollArrow>
              </ScrollTrack>
              <PanelFoot />
              <SplitHandle type="button" aria-label="Collapse panel"><Knob /></SplitHandle>
            </FeaturePanel>

            <Viewport>
              <ViewToolbar>
                {VIEW_TOOLS.map(([label, icon, menu]) => (
                  <ViewTool type="button" key={label} aria-label={label} $menu={menu}>
                    <Icon name={icon} />
                    {menu && <Caret $color="#888" />}
                  </ViewTool>
                ))}
              </ViewToolbar>
              <ModelText>Dan Aukes</ModelText>
              <Triad width="80" height="74" viewBox="0 0 80 74" fontFamily="Lato, sans-serif" fontWeight="300" fontSize="17" textAnchor="middle">
                <path d="M20 10H50V16H20Z" fill="#b51818" />
                <path d="M20 12H50V14H20Z" fill="#f08a8a" />
                <path d="M48 6L62 13L48 20Z" fill="#b51818" />
                <path d="M13 18H19V46H13Z" fill="#1b1bb8" />
                <path d="M15 18H17V46H15Z" fill="#8f8ff0" />
                <path d="M9 44H23L16 59Z" fill="#1b1bb8" />
                <circle cx="16" cy="13" r="7" fill="#173f17" />
                <text x="16" y="18" fontSize="14" fill="#0a8a0a">Y</text>
                <text x="66" y="18" fill="#e01010">X</text>
                <text x="16" y="71" fill="#1010e0">Z</text>
              </Triad>
              <ViewName>*Top</ViewName>
              <TaskPane>
                {TASKS.map(([label, icon], i) => (
                  <TaskButton type="button" key={label} aria-label={label} $on={i === 0}><Icon name={icon} /></TaskButton>
                ))}
              </TaskPane>
            </Viewport>
          </WorkRow>
          <StudyTabs>
            <StudyNav>
              {NAV.map(([label, d]) => (
                <StudyNavButton type="button" key={label} aria-label={label}>
                  <svg width="14" height="14" viewBox="0 0 14 14" fill="#85879c" stroke="#85879c"><path d={d} /></svg>
                </StudyNavButton>
              ))}
            </StudyNav>
            <StudyTab type="button" $w={88} $on>Model</StudyTab>
            <StudyTab type="button" $w={103}>3D Views</StudyTab>
            <StudyTab type="button" $w={171} $end={10}>Motion Study 1</StudyTab>
          </StudyTabs>
        </WorkArea>
      </Workspace>

      <StatusBar>
        <StatusMessage>SOLIDWORKS Student Edition - Academic Use Only</StatusMessage>
        <StatusCell $w={121}>Editing Part</StatusCell>
        <StatusCell $w={111}><Icon name="rebuild" /></StatusCell>
        <StatusCell $w={79}>MMGS</StatusCell>
        <StatusCell $w={35}><Caret $up /></StatusCell>
        <StatusCell $w={46}><Icon name="tag" /></StatusCell>
        <svg width="13" height="13" viewBox="0 0 13 13" fill="#bdbdbd" aria-hidden="true">
          <path d="M10 0H13V3H10ZM5 5H8V8H5ZM10 5H13V8H10ZM0 10H3V13H0ZM5 10H8V13H5ZM10 10H13V13H10Z" />
        </svg>
      </StatusBar>
    </Window>
  );
}
